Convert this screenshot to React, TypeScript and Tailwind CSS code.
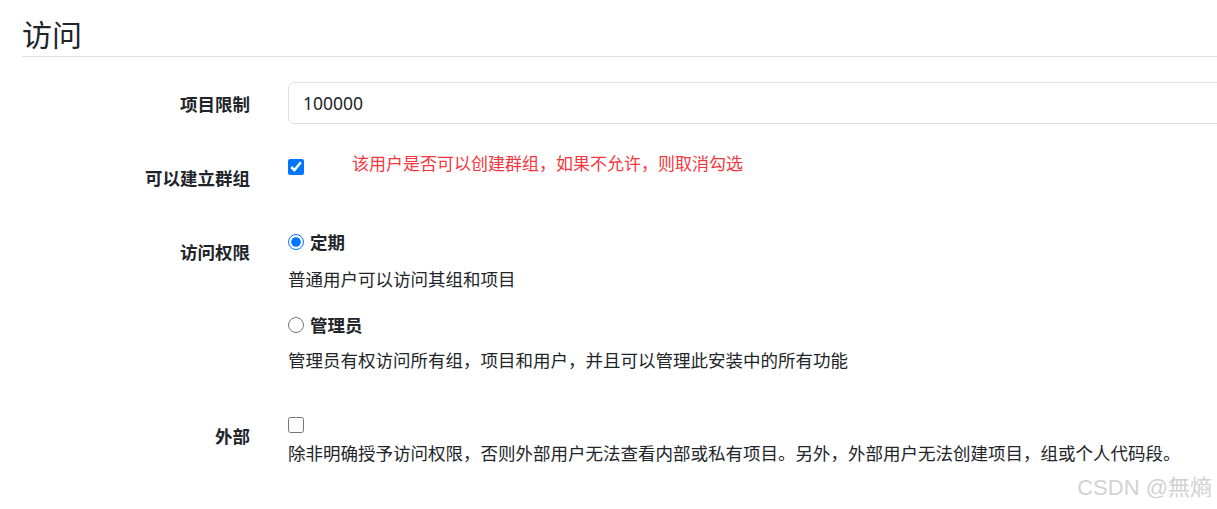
import React from "react";

export default function App() {
  const font = "font-['Noto_Sans','Noto_Sans_CJK_SC',sans-serif]";
  return (
    <div className={`relative w-[1217px] h-[509px] overflow-hidden bg-white text-[#212529] ${font}`}>
      <div className="ml-[22px] pt-[17px]">
        <h3 className="text-[30px] leading-[36px] pb-[3px] border-b border-[#dee2e6] font-normal">访问</h3>
      </div>

      {/* 项目限制 */}
      <div className="mt-[25px] flex items-center h-[42px]">
        <div className="w-[250px] shrink-0 text-right font-bold text-[17.5px] leading-[26px] mt-[2px]">项目限制</div>
        <div className="ml-[38px] shrink-0">
          <input
            readOnly
            value="100000"
            className="w-[960px] h-[42px] border border-[#dee2e6] rounded-[6px] pl-[14px] text-[17.5px] outline-none bg-white text-[#212529]"
          />
        </div>
      </div>

      {/* 可以建立群组 */}
      <div className="mt-[28px] flex items-start">
        <div className="w-[250px] shrink-0 text-right font-bold text-[17.5px] leading-[26px] mt-[13px]">可以建立群组</div>
        <div className="ml-[38px] flex items-start">
          <input type="checkbox" defaultChecked className="m-0 mt-[7px] w-[16px] h-[16px]" />
          <span className="ml-[48px] text-[17px] leading-[24px] text-[#f5363c]">
            该用户是否可以创建群组，如果不允许，则取消勾选
          </span>
        </div>
      </div>

      {/* 访问权限 */}
      <div className="mt-[39px] flex items-start">
        <div className="w-[250px] shrink-0 text-right font-bold text-[17.5px] leading-[26px] mt-[9px]">访问权限</div>
        <div className="ml-[38px] flex flex-col text-[17.5px]">
          <label className="flex items-center h-[24px]">
            <input type="radio" name="acc" defaultChecked className="m-0 w-[16px] h-[16px]" />
            <span className="ml-[6px] font-bold leading-[24px]">定期</span>
          </label>
          <div className="mt-[13px] leading-[24px]">普通用户可以访问其组和项目</div>
          <label className="mt-[22px] flex items-center h-[24px]">
            <input type="radio" name="acc" className="m-0 w-[16px] h-[16px]" />
            <span className="ml-[6px] font-bold leading-[24px]">管理员</span>
          </label>
          <div className="mt-[11px] leading-[24px]">管理员有权访问所有组，项目和用户，并且可以管理此安装中的所有功能</div>
        </div>
      </div>

      {/* 外部 */}
      <div className="mt-[45px] flex items-start">
        <div className="w-[250px] shrink-0 text-right font-bold text-[17.5px] leading-[26px] mt-[6px]">外部</div>
        <div className="ml-[38px] flex flex-col text-[17.5px]">
          <input type="checkbox" className="m-0 w-[16px] h-[16px]" />
          <div className="mt-[8px] leading-[24px] whitespace-nowrap">
            除非明确授予访问权限，否则外部用户无法查看内部或私有项目。另外，外部用户无法创建项目，组或个人代码段。
          </div>
        </div>
      </div>

      <div className="absolute right-[5px] bottom-[7px] text-[22px] leading-[28px] text-[#d2d2d2] font-['Liberation_Sans','Noto_Sans_CJK_SC',sans-serif]">
        CSDN @無熵
      </div>
    </div>
  );
}
